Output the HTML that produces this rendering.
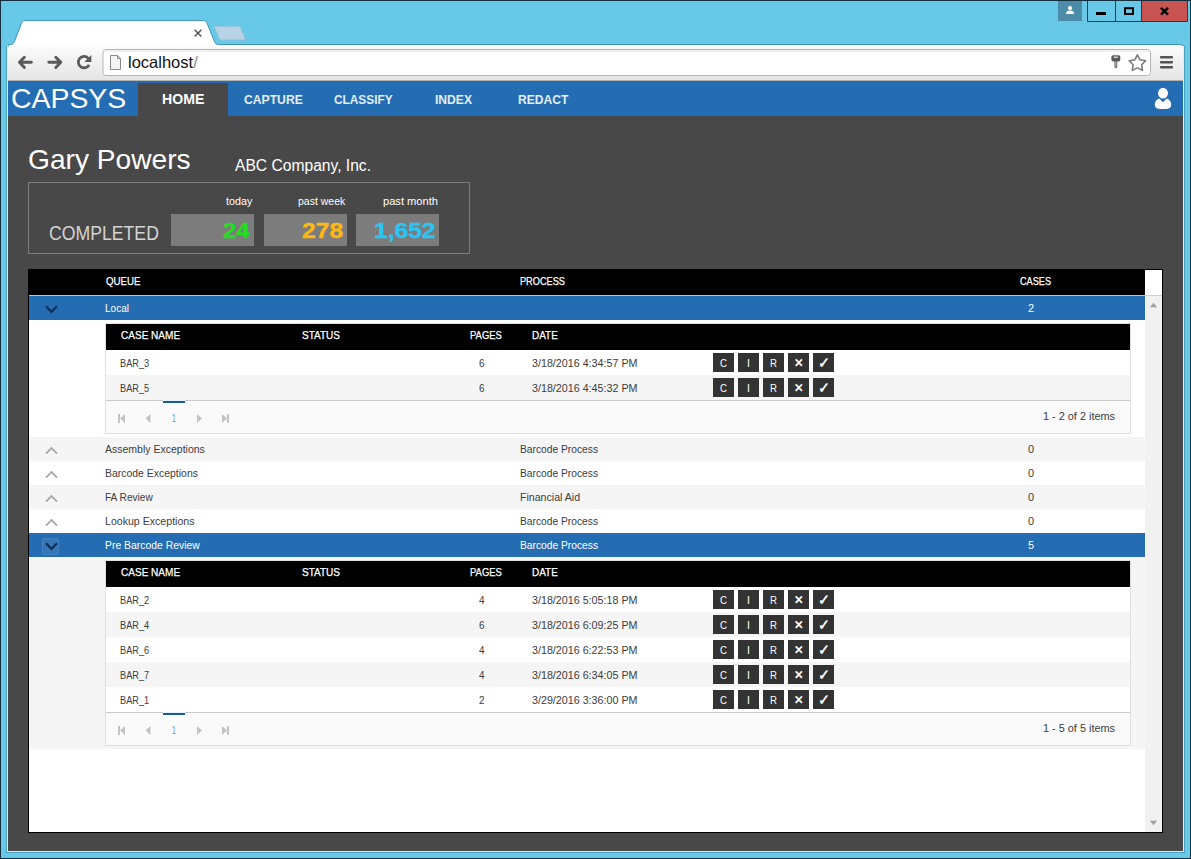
<!DOCTYPE html><html><head><meta charset="utf-8"><title>CAPSYS</title><style>
*{box-sizing:border-box;margin:0;padding:0}
html,body{width:1191px;height:859px;overflow:hidden}
body{position:relative;background:#67c8e8;font-family:"Liberation Sans",sans-serif;font-size:11px;color:#3c3c3c}
div,span,svg{position:absolute}
.t{white-space:nowrap;transform-origin:0 0;line-height:1;display:block}
.w{color:#fff}
#frame{left:0;top:0;width:1191px;height:859px;border:1px solid #14303f}
#page{left:8px;top:81px;width:1175px;height:770px;background:#484848}
#nav{left:8px;top:81px;width:1175px;height:35px;background:#246db3}
#grid{left:28px;top:269px;width:1135px;height:564px;background:#fff;border:1px solid #000}
.hdr{background:#000}
.row{left:29px;width:1116px;height:24px}
.alt{background:#f5f5f5}
.sel{background:#246db3}
.ng{left:105px;width:1026px;border:1px solid #dedede;background:#fff}
.nr{left:106px;width:1024px;height:25px}
.btn{width:21px;height:19px;background:#333}
.pg{left:106px;width:1024px;height:33px;background:#fafafa;border-top:1px solid #c9c9c9}
</style></head><body>
<div id="frame"></div>
<svg style="left:0;top:0" width="1191" height="82" viewBox="0 0 1191 82">
<defs>
<linearGradient id="tb" x1="0" y1="0" x2="0" y2="1"><stop offset="0" stop-color="#fcfcfc"/><stop offset="1" stop-color="#e4e4e4"/></linearGradient>
<linearGradient id="tabg" x1="0" y1="0" x2="0" y2="1"><stop offset="0" stop-color="#ffffff"/><stop offset=".8" stop-color="#ffffff"/><stop offset="1" stop-color="#fcfcfc"/></linearGradient>
</defs>
<!-- toolbar -->
<rect x="8" y="45" width="1175" height="36" fill="url(#tb)"/>
<path d="M8 44.5H1183" stroke="#3f93b5" stroke-width="1"/>
<rect x="8" y="80" width="1175" height="1" fill="#b3b3b3"/>
<path d="M1184 44 V48.5 A3.5 3.5 0 0 0 1180.5 45 H1180 V44 Z" fill="#67c8e8"/><path d="M1180 44.5 H1180.5 A3.5 3.5 0 0 1 1184 48" fill="none" stroke="#3f93b5" stroke-width="1"/>
<!-- active tab -->
<path d="M8 46 C8.5 44.5 10 44.6 11.5 44.4 C13 44 13.6 43.4 14.3 41.8 L21.4 23.6 C22.2 21.6 23 20.6 25 20.6 L203.5 20.6 C205.5 20.6 206.3 21.6 207.2 23.6 L214.6 41.8 C215.3 43.4 216 44.2 218 44.5 L222 46 L222 47 L8 47 Z" fill="url(#tabg)"/>
<path d="M8.5 46.5 C8.5 44.7 10 44.6 11.5 44.4 C13 44 13.6 43.4 14.3 41.8 L21.4 23.6 C22.2 21.6 23 20.6 25 20.6 L203.5 20.6 C205.5 20.6 206.3 21.6 207.2 23.6 L214.6 41.8 C215.3 43.4 216 44.3 218.5 44.5" fill="none" stroke="#3f93b5" stroke-width="1"/>
<!-- tab close x -->
<path d="M194.6 29.8L201.4 36.6M201.4 29.8L194.6 36.6" stroke="#525252" stroke-width="1.45"/>
<!-- new tab button -->
<path d="M215.2 26.2 L238.8 26.2 C239.8 26.2 240.3 26.7 240.7 27.6 L245.2 38.6 C245.6 39.6 245.2 40 244.2 40 L221 40 C220 40 219.5 39.6 219.1 38.6 L214.6 27.6 C214.2 26.7 214.4 26.2 215.2 26.2 Z" fill="#b9d3e6" stroke="#8fbdd6" stroke-width="1"/>
<!-- nav icons -->
<g fill="none" stroke="#5a5a5a" stroke-width="2.9" stroke-linecap="round" stroke-linejoin="round">
<path d="M24.4 57.2 L19.4 62.3 L24.4 67.4 M20 62.3 H31.4"/>
<path d="M55.8 57.2 L60.8 62.3 L55.8 67.4 M60.2 62.3 H48.8"/>
</g>
<path d="M88.2 58.2 A5.7 5.7 0 1 0 89.1 64.8" fill="none" stroke="#5a5a5a" stroke-width="2.8"/>
<path d="M91.3 55 V62 H84.3 Z" fill="#5a5a5a"/>
<!-- omnibox -->
<rect x="103" y="49.5" width="1047.5" height="26" rx="3" ry="3" fill="#fff" stroke="#b4b4b4" stroke-width="1"/>
<path d="M103.5 51 H1150" stroke="#e3e3e3" stroke-width="1"/>
<path d="M110.5 55.5 H117.5 L120.5 58.5 V69.5 H110.5 Z" fill="#f4f4f4" stroke="#8a8a8a" stroke-width="1"/>
<path d="M117.5 55.5 V58.5 H120.5" fill="none" stroke="#8a8a8a" stroke-width="1"/>
<text x="128" y="67.8" font-family="Liberation Sans, sans-serif" font-size="16.5" fill="#111">localhost<tspan fill="#8c8c8c">/</tspan></text>
<!-- key icon -->
<rect x="1111.4" y="55.2" width="8.9" height="6.2" rx="1.6" ry="1.6" fill="#5a5a5a"/>
<rect x="1113.6" y="56.6" width="4.4" height="1.5" rx=".5" fill="#d0d0d0"/>
<path d="M1114.4 61 H1117.3 V67.3 L1115.85 68.6 L1114.4 67.3 Z" fill="#6a6a6a"/>
<rect x="1115.4" y="61.6" width=".9" height="5.4" fill="#c4c4c4"/>
<!-- star -->
<path d="M1137.4 54.8 L1140.0 59.8 L1145.6 60.7 L1141.7 64.8 L1142.5 70.4 L1137.4 67.9 L1132.3 70.4 L1133.1 64.8 L1129.2 60.7 L1134.8 59.8 Z" fill="#fff" stroke="#7c7c7c" stroke-width="1.6" stroke-linejoin="round"/>
<!-- menu -->
<g fill="#555"><rect x="1160" y="56" width="13" height="2.6" rx=".8"/><rect x="1160" y="61" width="13" height="2.6" rx=".8"/><rect x="1160" y="66" width="13" height="2.6" rx=".8"/></g>
<!-- window controls -->
<rect x="1058" y="1" width="24" height="20" fill="#4d8ca8"/>
<circle cx="1070" cy="8" r="2.1" fill="#fff"/>
<path d="M1066 14 C1066 11.6 1067.4 10.5 1070 10.5 C1072.6 10.5 1074.2 11.6 1074.2 14 Z" fill="#fff"/>
<rect x="1142" y="1" width="46" height="20.5" fill="#c75450"/>
<path d="M1087.5 1 V21.5 H1187.5 V1 M1115.5 1 V21.5 M1141.5 1 V21.5" fill="none" stroke="#1b3d50" stroke-width="1"/>
<rect x="1096" y="12" width="10" height="3" fill="#000"/>
<rect x="1125" y="8.2" width="8" height="5.8" fill="none" stroke="#000" stroke-width="2"/>
<path d="M1161 7.8 L1168 14.6 M1168 7.8 L1161 14.6" stroke="#000" stroke-width="2.4"/>
</svg>
<div style="left:6px;top:46px;width:1179px;height:807px;border:1px solid #4d9fbe;border-top:none"></div>
<div style="left:7px;top:46px;width:1177px;height:806px;border:1px solid #d9eef7;border-top:none"></div>

<div id="page"></div>
<div id="nav"></div>
<span class="t" style="left:11.29px;top:85.0px;font-size:28px;transform:scaleX(1.0141);color:#fff;">CAPSYS</span>
<div style="left:138px;top:83px;width:90px;height:33px;background:#484848"></div>
<span class="t" style="left:162.40px;top:92.0px;font-size:14px;transform:scaleX(1.0081);color:#fff;font-weight:bold;">HOME</span>
<span class="t" style="left:244.00px;top:94.0px;font-size:12px;transform:scaleX(1.0138);color:#e3eef6;font-weight:bold;">CAPTURE</span>
<span class="t" style="left:334.00px;top:94.0px;font-size:12px;transform:scaleX(0.9876);color:#e3eef6;font-weight:bold;">CLASSIFY</span>
<span class="t" style="left:435.00px;top:94.0px;font-size:12px;transform:scaleX(1.0090);color:#e3eef6;font-weight:bold;">INDEX</span>
<span class="t" style="left:518.00px;top:94.0px;font-size:12px;transform:scaleX(1.0066);color:#e3eef6;font-weight:bold;">REDACT</span>
<svg style="left:1153px;top:87px" width="20" height="23" viewBox="0 0 20 23"><ellipse cx="10" cy="6.2" rx="5" ry="5.4" fill="#fff"/><path d="M1.8 18 Q1.6 13.4 6.4 11.6 L10 15.2 L13.6 11.6 Q18.4 13.4 18.2 18 Q18 21.9 12.5 22 L7.5 22 Q2 21.9 1.8 18Z" fill="#fff"/></svg>
<span class="t" style="left:27.80px;top:145.6px;font-size:28px;transform:scaleX(1.0049);color:#fff;">Gary Powers</span>
<span class="t" style="left:235.10px;top:158.0px;font-size:16px;transform:scaleX(0.9763);color:#fff;">ABC Company, Inc.</span>
<div style="left:28px;top:182px;width:442px;height:72px;border:1px solid #7d7d7d"></div>
<span class="t" style="left:48.62px;top:223.0px;font-size:20px;transform:scaleX(0.8828);color:#d4d4d4;">COMPLETED</span>
<div style="left:171px;top:214px;width:83px;height:32px;background:#7c7c7c"></div>
<span class="t" style="left:226.20px;top:196.0px;font-size:11px;transform:scaleX(0.9778);color:#fff;">today</span>
<span class="t" style="left:222.70px;top:220.0px;font-size:22.5px;transform:scaleX(1.0622);color:#20df20;font-weight:bold;-webkit-text-stroke:.4px;">24</span>
<div style="left:264px;top:214px;width:83px;height:32px;background:#7c7c7c"></div>
<span class="t" style="left:297.70px;top:196.0px;font-size:11px;transform:scaleX(0.9535);color:#fff;">past week</span>
<span class="t" style="left:301.90px;top:220.0px;font-size:22.5px;transform:scaleX(1.0965);color:#fdb813;font-weight:bold;-webkit-text-stroke:.4px;">278</span>
<div style="left:356px;top:214px;width:83px;height:32px;background:#7c7c7c"></div>
<span class="t" style="left:382.60px;top:196.0px;font-size:11px;transform:scaleX(1.0110);color:#fff;">past month</span>
<span class="t" style="left:374.21px;top:220.0px;font-size:22.5px;transform:scaleX(1.0932);color:#2ac4f5;font-weight:bold;-webkit-text-stroke:.4px;">1,652</span>
<div id="grid"></div>
<div class="hdr" style="left:29px;top:270px;width:1116px;height:25px"></div>
<div style="left:29px;top:295px;width:1116px;height:1px;background:#b4c6da"></div><div style="left:1145px;top:295px;width:17px;height:1px;background:#cfcfcf"></div>
<div style="left:1145px;top:296px;width:17px;height:536px;background:#f1f1f1"></div>
<svg style="left:1145px;top:296px" width="17" height="536"><path d="M4.8 11.2 L8.5 6.8 L12.2 11.2Z M4.8 524.8 L8.5 529.2 L12.2 524.8Z" fill="#a3a3a3"/></svg>
<span class="t" style="left:106.40px;top:276.0px;font-size:11px;transform:scaleX(0.8819);color:#fff;-webkit-text-stroke:.25px;">QUEUE</span>
<span class="t" style="left:519.60px;top:276.0px;font-size:11px;transform:scaleX(0.8344);color:#fff;-webkit-text-stroke:.25px;">PROCESS</span>
<span class="t" style="left:1019.60px;top:276.0px;font-size:11px;transform:scaleX(0.8335);color:#fff;-webkit-text-stroke:.25px;">CASES</span>
<div class="row sel" style="top:296px"></div>
<svg style="left:44.5px;top:305px" width="13" height="9" viewBox="0 0 13 9"><path d="M1 1.2 L6.5 6.9 L12 1.2" fill="none" stroke="#0d2e52" stroke-width="2.2"/></svg>
<span class="t" style="left:105.40px;top:303.0px;font-size:11px;transform:scaleX(0.9129);color:#fff;">Local</span>
<span class="t" style="left:1028.00px;top:303.0px;font-size:11px;color:#fff;">2</span>
<div class="ng" style="top:323px;height:111px"></div>
<div class="hdr" style="left:106px;top:324px;width:1024px;height:26px"></div>
<span class="t" style="left:120.50px;top:330.0px;font-size:11px;transform:scaleX(0.9123);color:#fff;-webkit-text-stroke:.25px;">CASE NAME</span>
<span class="t" style="left:301.60px;top:330.0px;font-size:11px;transform:scaleX(0.9077);color:#fff;-webkit-text-stroke:.25px;">STATUS</span>
<span class="t" style="left:470.00px;top:330.0px;font-size:11px;transform:scaleX(0.8571);color:#fff;-webkit-text-stroke:.25px;">PAGES</span>
<span class="t" style="left:531.90px;top:330.0px;font-size:11px;transform:scaleX(0.9048);color:#fff;-webkit-text-stroke:.25px;">DATE</span>
<div class="nr " style="top:350px"></div>
<span class="t" style="left:120.40px;top:358.0px;font-size:11px;transform:scaleX(0.8349);">BAR_3</span>
<span class="t" style="left:479.30px;top:358.0px;font-size:11px;transform:scaleX(0.9000);">6</span>
<span class="t" style="left:531.90px;top:358.0px;font-size:11px;transform:scaleX(0.9742);">3/18/2016 4:34:57 PM</span>
<div class="btn" style="left:713px;top:353px"></div>
<span class="t" style="left:720.10px;top:358.0px;font-size:11px;transform:scaleX(0.8750);color:#fff;">C</span>
<div class="btn" style="left:738px;top:353px"></div>
<span class="t" style="left:746.70px;top:358.0px;font-size:11px;transform:scaleX(0.9500);color:#fff;">I</span>
<div class="btn" style="left:763px;top:353px"></div>
<span class="t" style="left:770.10px;top:358.0px;font-size:11px;transform:scaleX(0.8750);color:#fff;">R</span>
<div class="btn" style="left:788px;top:353px"></div>
<span class="t" style="left:793.85px;top:357.4px;font-size:12px;transform:scaleX(0.9500);color:#fff;font-weight:bold;">✕</span>
<div class="btn" style="left:813px;top:353px"></div>
<span class="t" style="left:817.90px;top:355.7px;font-size:14.5px;transform:scaleX(0.9500);color:#fff;font-weight:bold;">✓</span>
<div class="nr alt" style="top:375px"></div>
<span class="t" style="left:120.40px;top:383.0px;font-size:11px;transform:scaleX(0.8349);">BAR_5</span>
<span class="t" style="left:479.30px;top:383.0px;font-size:11px;transform:scaleX(0.9000);">6</span>
<span class="t" style="left:531.90px;top:383.0px;font-size:11px;transform:scaleX(0.9742);">3/18/2016 4:45:32 PM</span>
<div class="btn" style="left:713px;top:378px"></div>
<span class="t" style="left:720.10px;top:383.0px;font-size:11px;transform:scaleX(0.8750);color:#fff;">C</span>
<div class="btn" style="left:738px;top:378px"></div>
<span class="t" style="left:746.70px;top:383.0px;font-size:11px;transform:scaleX(0.9500);color:#fff;">I</span>
<div class="btn" style="left:763px;top:378px"></div>
<span class="t" style="left:770.10px;top:383.0px;font-size:11px;transform:scaleX(0.8750);color:#fff;">R</span>
<div class="btn" style="left:788px;top:378px"></div>
<span class="t" style="left:793.85px;top:382.4px;font-size:12px;transform:scaleX(0.9500);color:#fff;font-weight:bold;">✕</span>
<div class="btn" style="left:813px;top:378px"></div>
<span class="t" style="left:817.90px;top:380.7px;font-size:14.5px;transform:scaleX(0.9500);color:#fff;font-weight:bold;">✓</span>
<div class="pg" style="top:400px"></div>
<div style="left:163px;top:400px;width:22px;height:3px;background:#1c5d99;border-top:1px solid #eaf6fd"></div>
<svg style="left:106px;top:400px" width="140" height="32"><g fill="#c3c3c3"><path d="M12 14h2v9h-2z M19 14v9l-5-4.5z"/><path d="M44.5 14v9l-5-4.5z"/><path d="M91 14v9l5-4.5z"/><path d="M116 14v9l5-4.5z M121 14h2v9h-2z"/></g></svg>
<span class="t" style="left:171.80px;top:413.0px;font-size:11px;transform:scaleX(0.6333);color:#6f94c0;">1</span>
<span class="t" style="left:1042.80px;top:410.8px;font-size:11px;transform:scaleX(0.9897);">1 - 2 of 2 items</span>
<div class="row alt" style="top:437px"></div>
<svg style="left:44.5px;top:446px" width="13" height="9" viewBox="0 0 13 9"><path d="M1 7.6 L6.5 2 L12 7.6" fill="none" stroke="#a6a6a6" stroke-width="1.8"/></svg>
<span class="t" style="left:105.40px;top:444.0px;font-size:11px;transform:scaleX(0.9548);">Assembly Exceptions</span>
<span class="t" style="left:519.50px;top:444.0px;font-size:11px;transform:scaleX(0.9316);">Barcode Process</span>
<span class="t" style="left:1028.00px;top:444.0px;font-size:11px;">0</span>
<div class="row " style="top:461px"></div>
<svg style="left:44.5px;top:470px" width="13" height="9" viewBox="0 0 13 9"><path d="M1 7.6 L6.5 2 L12 7.6" fill="none" stroke="#a6a6a6" stroke-width="1.8"/></svg>
<span class="t" style="left:105.40px;top:468.0px;font-size:11px;transform:scaleX(0.9498);">Barcode Exceptions</span>
<span class="t" style="left:519.50px;top:468.0px;font-size:11px;transform:scaleX(0.9316);">Barcode Process</span>
<span class="t" style="left:1028.00px;top:468.0px;font-size:11px;">0</span>
<div class="row alt" style="top:485px"></div>
<svg style="left:44.5px;top:494px" width="13" height="9" viewBox="0 0 13 9"><path d="M1 7.6 L6.5 2 L12 7.6" fill="none" stroke="#a6a6a6" stroke-width="1.8"/></svg>
<span class="t" style="left:105.40px;top:492.0px;font-size:11px;transform:scaleX(0.9197);">FA Review</span>
<span class="t" style="left:519.50px;top:492.0px;font-size:11px;transform:scaleX(0.9625);">Financial Aid</span>
<span class="t" style="left:1028.00px;top:492.0px;font-size:11px;">0</span>
<div class="row " style="top:509px"></div>
<svg style="left:44.5px;top:518px" width="13" height="9" viewBox="0 0 13 9"><path d="M1 7.6 L6.5 2 L12 7.6" fill="none" stroke="#a6a6a6" stroke-width="1.8"/></svg>
<span class="t" style="left:105.40px;top:516.0px;font-size:11px;transform:scaleX(0.9631);">Lookup Exceptions</span>
<span class="t" style="left:519.50px;top:516.0px;font-size:11px;transform:scaleX(0.9316);">Barcode Process</span>
<span class="t" style="left:1028.00px;top:516.0px;font-size:11px;">0</span>
<div class="row sel" style="top:533px"></div>
<div style="left:42px;top:538px;width:17px;height:17px;border-radius:3px;background:rgba(255,255,255,.07);border:1px solid rgba(255,255,255,.08)"></div><svg style="left:44.5px;top:542px" width="13" height="9" viewBox="0 0 13 9"><path d="M1 1.2 L6.5 6.9 L12 1.2" fill="none" stroke="#0d2e52" stroke-width="2.2"/></svg>
<span class="t" style="left:105.40px;top:540.0px;font-size:11px;transform:scaleX(0.9449);color:#fff;">Pre Barcode Review</span>
<span class="t" style="left:519.50px;top:540.0px;font-size:11px;transform:scaleX(0.9316);color:#fff;">Barcode Process</span>
<span class="t" style="left:1028.00px;top:540.0px;font-size:11px;color:#fff;">5</span>
<div class="alt" style="left:29px;top:557px;width:1116px;height:192px"></div>
<div class="ng" style="top:560px;height:186px"></div>
<div class="hdr" style="left:106px;top:561px;width:1024px;height:26px"></div>
<span class="t" style="left:120.50px;top:567.0px;font-size:11px;transform:scaleX(0.9123);color:#fff;-webkit-text-stroke:.25px;">CASE NAME</span>
<span class="t" style="left:301.60px;top:567.0px;font-size:11px;transform:scaleX(0.9077);color:#fff;-webkit-text-stroke:.25px;">STATUS</span>
<span class="t" style="left:470.00px;top:567.0px;font-size:11px;transform:scaleX(0.8571);color:#fff;-webkit-text-stroke:.25px;">PAGES</span>
<span class="t" style="left:531.90px;top:567.0px;font-size:11px;transform:scaleX(0.9048);color:#fff;-webkit-text-stroke:.25px;">DATE</span>
<div class="nr " style="top:587px"></div>
<span class="t" style="left:120.40px;top:595.0px;font-size:11px;transform:scaleX(0.8349);">BAR_2</span>
<span class="t" style="left:479.30px;top:595.0px;font-size:11px;transform:scaleX(0.9000);">4</span>
<span class="t" style="left:531.90px;top:595.0px;font-size:11px;transform:scaleX(0.9742);">3/18/2016 5:05:18 PM</span>
<div class="btn" style="left:713px;top:590px"></div>
<span class="t" style="left:720.10px;top:595.0px;font-size:11px;transform:scaleX(0.8750);color:#fff;">C</span>
<div class="btn" style="left:738px;top:590px"></div>
<span class="t" style="left:746.70px;top:595.0px;font-size:11px;transform:scaleX(0.9500);color:#fff;">I</span>
<div class="btn" style="left:763px;top:590px"></div>
<span class="t" style="left:770.10px;top:595.0px;font-size:11px;transform:scaleX(0.8750);color:#fff;">R</span>
<div class="btn" style="left:788px;top:590px"></div>
<span class="t" style="left:793.85px;top:594.4px;font-size:12px;transform:scaleX(0.9500);color:#fff;font-weight:bold;">✕</span>
<div class="btn" style="left:813px;top:590px"></div>
<span class="t" style="left:817.90px;top:592.7px;font-size:14.5px;transform:scaleX(0.9500);color:#fff;font-weight:bold;">✓</span>
<div class="nr alt" style="top:612px"></div>
<span class="t" style="left:120.40px;top:620.0px;font-size:11px;transform:scaleX(0.8349);">BAR_4</span>
<span class="t" style="left:479.30px;top:620.0px;font-size:11px;transform:scaleX(0.9000);">6</span>
<span class="t" style="left:531.90px;top:620.0px;font-size:11px;transform:scaleX(0.9742);">3/18/2016 6:09:25 PM</span>
<div class="btn" style="left:713px;top:615px"></div>
<span class="t" style="left:720.10px;top:620.0px;font-size:11px;transform:scaleX(0.8750);color:#fff;">C</span>
<div class="btn" style="left:738px;top:615px"></div>
<span class="t" style="left:746.70px;top:620.0px;font-size:11px;transform:scaleX(0.9500);color:#fff;">I</span>
<div class="btn" style="left:763px;top:615px"></div>
<span class="t" style="left:770.10px;top:620.0px;font-size:11px;transform:scaleX(0.8750);color:#fff;">R</span>
<div class="btn" style="left:788px;top:615px"></div>
<span class="t" style="left:793.85px;top:619.4px;font-size:12px;transform:scaleX(0.9500);color:#fff;font-weight:bold;">✕</span>
<div class="btn" style="left:813px;top:615px"></div>
<span class="t" style="left:817.90px;top:617.7px;font-size:14.5px;transform:scaleX(0.9500);color:#fff;font-weight:bold;">✓</span>
<div class="nr " style="top:637px"></div>
<span class="t" style="left:120.40px;top:645.0px;font-size:11px;transform:scaleX(0.8349);">BAR_6</span>
<span class="t" style="left:479.30px;top:645.0px;font-size:11px;transform:scaleX(0.9000);">4</span>
<span class="t" style="left:531.90px;top:645.0px;font-size:11px;transform:scaleX(0.9742);">3/18/2016 6:22:53 PM</span>
<div class="btn" style="left:713px;top:640px"></div>
<span class="t" style="left:720.10px;top:645.0px;font-size:11px;transform:scaleX(0.8750);color:#fff;">C</span>
<div class="btn" style="left:738px;top:640px"></div>
<span class="t" style="left:746.70px;top:645.0px;font-size:11px;transform:scaleX(0.9500);color:#fff;">I</span>
<div class="btn" style="left:763px;top:640px"></div>
<span class="t" style="left:770.10px;top:645.0px;font-size:11px;transform:scaleX(0.8750);color:#fff;">R</span>
<div class="btn" style="left:788px;top:640px"></div>
<span class="t" style="left:793.85px;top:644.4px;font-size:12px;transform:scaleX(0.9500);color:#fff;font-weight:bold;">✕</span>
<div class="btn" style="left:813px;top:640px"></div>
<span class="t" style="left:817.90px;top:642.7px;font-size:14.5px;transform:scaleX(0.9500);color:#fff;font-weight:bold;">✓</span>
<div class="nr alt" style="top:662px"></div>
<span class="t" style="left:120.40px;top:670.0px;font-size:11px;transform:scaleX(0.8349);">BAR_7</span>
<span class="t" style="left:479.30px;top:670.0px;font-size:11px;transform:scaleX(0.9000);">4</span>
<span class="t" style="left:531.90px;top:670.0px;font-size:11px;transform:scaleX(0.9742);">3/18/2016 6:34:05 PM</span>
<div class="btn" style="left:713px;top:665px"></div>
<span class="t" style="left:720.10px;top:670.0px;font-size:11px;transform:scaleX(0.8750);color:#fff;">C</span>
<div class="btn" style="left:738px;top:665px"></div>
<span class="t" style="left:746.70px;top:670.0px;font-size:11px;transform:scaleX(0.9500);color:#fff;">I</span>
<div class="btn" style="left:763px;top:665px"></div>
<span class="t" style="left:770.10px;top:670.0px;font-size:11px;transform:scaleX(0.8750);color:#fff;">R</span>
<div class="btn" style="left:788px;top:665px"></div>
<span class="t" style="left:793.85px;top:669.4px;font-size:12px;transform:scaleX(0.9500);color:#fff;font-weight:bold;">✕</span>
<div class="btn" style="left:813px;top:665px"></div>
<span class="t" style="left:817.90px;top:667.7px;font-size:14.5px;transform:scaleX(0.9500);color:#fff;font-weight:bold;">✓</span>
<div class="nr " style="top:687px"></div>
<span class="t" style="left:120.40px;top:695.0px;font-size:11px;transform:scaleX(0.8349);">BAR_1</span>
<span class="t" style="left:479.30px;top:695.0px;font-size:11px;transform:scaleX(0.9000);">2</span>
<span class="t" style="left:531.90px;top:695.0px;font-size:11px;transform:scaleX(0.9742);">3/29/2016 3:36:00 PM</span>
<div class="btn" style="left:713px;top:690px"></div>
<span class="t" style="left:720.10px;top:695.0px;font-size:11px;transform:scaleX(0.8750);color:#fff;">C</span>
<div class="btn" style="left:738px;top:690px"></div>
<span class="t" style="left:746.70px;top:695.0px;font-size:11px;transform:scaleX(0.9500);color:#fff;">I</span>
<div class="btn" style="left:763px;top:690px"></div>
<span class="t" style="left:770.10px;top:695.0px;font-size:11px;transform:scaleX(0.8750);color:#fff;">R</span>
<div class="btn" style="left:788px;top:690px"></div>
<span class="t" style="left:793.85px;top:694.4px;font-size:12px;transform:scaleX(0.9500);color:#fff;font-weight:bold;">✕</span>
<div class="btn" style="left:813px;top:690px"></div>
<span class="t" style="left:817.90px;top:692.7px;font-size:14.5px;transform:scaleX(0.9500);color:#fff;font-weight:bold;">✓</span>
<div class="pg" style="top:712px"></div>
<div style="left:163px;top:712px;width:22px;height:3px;background:#1c5d99;border-top:1px solid #eaf6fd"></div>
<svg style="left:106px;top:712px" width="140" height="32"><g fill="#c3c3c3"><path d="M12 14h2v9h-2z M19 14v9l-5-4.5z"/><path d="M44.5 14v9l-5-4.5z"/><path d="M91 14v9l5-4.5z"/><path d="M116 14v9l5-4.5z M121 14h2v9h-2z"/></g></svg>
<span class="t" style="left:171.80px;top:725.0px;font-size:11px;transform:scaleX(0.6333);color:#6f94c0;">1</span>
<span class="t" style="left:1042.80px;top:722.8px;font-size:11px;transform:scaleX(0.9897);">1 - 5 of 5 items</span>
</body></html>
